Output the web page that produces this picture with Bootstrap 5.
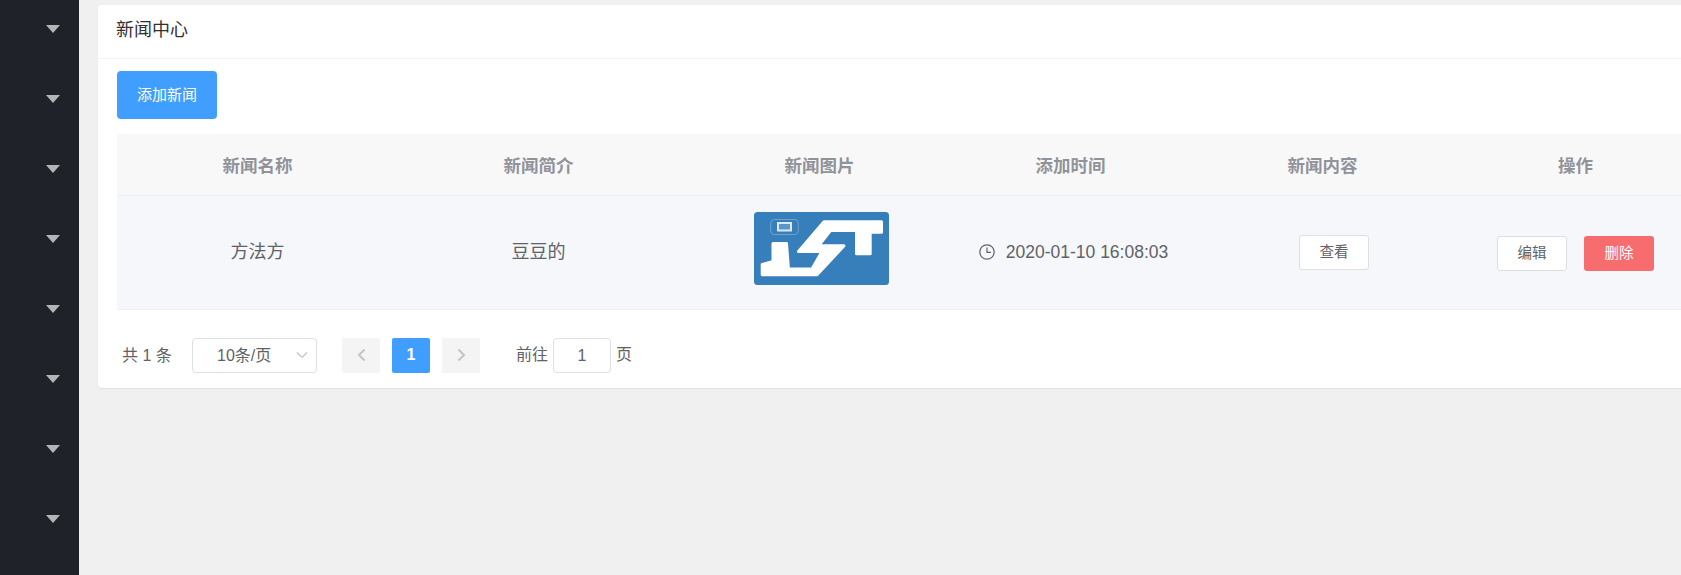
<!DOCTYPE html>
<html lang="zh-CN">
<head>
    <meta charset="UTF-8">
    <title>新闻中心</title>
    <link href="https://cdn.jsdelivr.net/npm/bootstrap@5.3.0/dist/css/bootstrap.min.css" rel="stylesheet">
    <style>
        html, body { height: 100%; overflow: hidden; }
        body { background: #f0f0f0; font-family: "Liberation Sans", "Noto Sans CJK SC", sans-serif; color: #606266; }
        .page-wrap { width: 1681px; height: 575px; }
        .side-bar { width: 79px; background: #1f2229; flex-shrink: 0; padding-top: 25px; padding-right: 19px; overflow: hidden; }
        .side-item { height: 70px; flex-shrink: 0; }
        .side-arrow { width: 0; height: 0; border-left: 7.5px solid transparent; border-right: 7.5px solid transparent; border-top: 8px solid #b4b5b7; }
        .main-area { padding: 5px 0 0 19px; min-width: 0; flex: 1; }
        .news-card { border: 0; border-radius: 4px 0 0 4px; box-shadow: 0 1px 1px rgba(0,0,0,.07); width: 1602px; height: 383px; overflow: hidden; }
        .news-card .card-header { background: #fff; border-bottom: 1px solid #f2f2f4; height: 54px; padding: 0 18px; font-size: 18px; line-height: 51px; color: #303133; }
        .news-card .card-body { padding: 12px 0 0 19px; }
        .btn-add { background: #409eff; border: 0; color: #fff; width: 100px; height: 48px; font-size: 15px; border-radius: 4px; padding: 0; display: block; }
        .news-table { table-layout: fixed; width: 1570px; margin: 15px 0 0; text-align: center; border-color: #ebeef5; }
        .news-table th { background: #f8f8f9; color: #909399; font-size: 17.5px; font-weight: 700; height: 61px; vertical-align: middle; padding: 4px 0 0; border-bottom: 1px solid #ebeef5; }
        .news-table td { background: #f5f7fa; color: #606266; font-size: 18px; height: 114px; vertical-align: middle; padding: 0; border-bottom: 1px solid #ebeef5; }
        .col-wide { width: 281px; }
        .col-mid { width: 221px; }
        .col-five { width: 283px; }
        .col-last { width: 223px; }
        .logo-box { display: block; width: 135px; height: 73px; margin: 0 0 8px 75px; }
        .time-cell { gap: 11px; color: #606266; font-size: 17.5px; padding-left: 6px; }
        .view-cell { padding-left: 23px !important; }
        .action-cell { gap: 17px; padding-top: 2px; }
        .btn-plain { background: #fff; border: 1px solid #dcdfe6; color: #606266; width: 70px; height: 35px; font-size: 14.5px; padding: 2px 0 0; border-radius: 3px; }
        .btn-del { background: #f76d6f; border: 0; color: #fff; width: 70px; height: 35px; font-size: 14.5px; padding: 2px 0 0; border-radius: 3px; }
        .pager-row { padding: 28px 0 0 5px; font-size: 16px; color: #606266; }
        .pager-total { width: 70px; line-height: 36px; }
        .size-select { width: 125px; height: 35px; border: 1px solid #dcdfe6; border-radius: 4px; padding-left: 24px; margin-right: 25px; color: #606266; line-height: 34px; }
        .page-btn { width: 38px; height: 35px; background: #f4f4f5; border-radius: 2px; margin-right: 12px; color: #c0c4cc; }
        .page-on { background: #409eff; color: #fff; font-weight: 700; }
        .jump-wrap { margin-left: 24px; gap: 5px; height: 35px; line-height: 38px; }
        .jump-input { width: 58px; height: 35px; border: 1px solid #dcdfe6; border-radius: 4px; line-height: 34px; text-align: center; }
    </style>
</head>
<body>
    <div class="page-wrap d-flex">
        <!-- Sidebar -->
        <div class="side-bar d-flex flex-column align-items-end">
            <div class="side-item"><div class="side-arrow"></div></div>
            <div class="side-item"><div class="side-arrow"></div></div>
            <div class="side-item"><div class="side-arrow"></div></div>
            <div class="side-item"><div class="side-arrow"></div></div>
            <div class="side-item"><div class="side-arrow"></div></div>
            <div class="side-item"><div class="side-arrow"></div></div>
            <div class="side-item"><div class="side-arrow"></div></div>
            <div class="side-item"><div class="side-arrow"></div></div>
        </div>

        <div class="main-area">
            <div class="card news-card">
                <div class="card-header">新闻中心</div>
                <div class="card-body">
                    <button class="btn btn-add" type="button">添加新闻</button>

                    <!-- News Table -->
                    <table class="table news-table">
                        <colgroup>
                            <col class="col-wide"><col class="col-wide"><col class="col-wide">
                            <col class="col-mid"><col class="col-five"><col class="col-last">
                        </colgroup>
                        <thead>
                            <tr>
                                <th>新闻名称</th>
                                <th>新闻简介</th>
                                <th>新闻图片</th>
                                <th>添加时间</th>
                                <th>新闻内容</th>
                                <th>操作</th>
                            </tr>
                        </thead>
                        <tbody>
                            <tr>
                                <td>方法方</td>
                                <td>豆豆的</td>
                                <td>
                                    <svg class="logo-box" viewBox="0 0 135 73" role="img" aria-label="logo">
                                        <rect width="135" height="73" rx="3.5" fill="#367fbb"/>
                                        <rect x="16.7" y="7.5" width="27.6" height="15" rx="3.5" fill="none" stroke="#6fa3cf" stroke-width="1"/>
                                        <rect x="24" y="11" width="13" height="7.5" fill="#5b96c8" stroke="#dce8f3" stroke-width="2"/>
                                        <path d="M19 31.5H32.5L34.5 57H58L68 39.5H44.5L70 9.8H127.5V20.2H116.2V41.8H102.5V18.5H76.5L64.5 33.8H90L63 62.8H8.2V52.5L19 49.5Z" fill="#fff" stroke="#fff" stroke-width="3" stroke-linejoin="round"/>
                                    </svg>
                                </td>
                                <td>
                                    <div class="time-cell d-flex align-items-center justify-content-center">
                                        <svg width="16" height="16" viewBox="0 0 16 16" fill="none" stroke="#606266" stroke-width="1.2">
                                            <circle cx="8" cy="8" r="7.2"/>
                                            <path d="M8 3.6V8.4H12"/>
                                        </svg>
                                        <span>2020-01-10 16:08:03</span>
                                    </div>
                                </td>
                                <td class="view-cell"><button class="btn btn-plain" type="button">查看</button></td>
                                <td>
                                    <div class="action-cell d-flex justify-content-center">
                                        <button class="btn btn-plain" type="button">编辑</button>
                                        <button class="btn btn-del" type="button">删除</button>
                                    </div>
                                </td>
                            </tr>
                        </tbody>
                    </table>

                    <!-- Pagination -->
                    <div class="pager-row d-flex align-items-start">
                        <div class="pager-total">共 1 条</div>
                        <div class="size-select position-relative">10条/页
                            <svg class="position-absolute top-50 end-0 translate-middle-y me-2" width="12" height="8" viewBox="0 0 12 8" fill="none" stroke="#c0c4cc" stroke-width="1.2"><path d="M1 1.5L6 6.5L11 1.5"/></svg>
                        </div>
                        <div class="page-btn d-flex align-items-center justify-content-center">
                            <svg width="9" height="14" viewBox="0 0 9 14" fill="none" stroke="#c0c4cc" stroke-width="2"><path d="M7.5 1.5L2 7L7.5 12.5"/></svg>
                        </div>
                        <div class="page-btn page-on d-flex align-items-center justify-content-center">1</div>
                        <div class="page-btn d-flex align-items-center justify-content-center">
                            <svg width="9" height="14" viewBox="0 0 9 14" fill="none" stroke="#c0c4cc" stroke-width="2"><path d="M1.5 1.5L7 7L1.5 12.5"/></svg>
                        </div>
                        <div class="jump-wrap d-flex align-items-center">
                            <span>前往</span>
                            <div class="jump-input">1</div>
                            <span>页</span>
                        </div>
                    </div>
                </div>
            </div>
        </div>
    </div>
</body>
</html>
